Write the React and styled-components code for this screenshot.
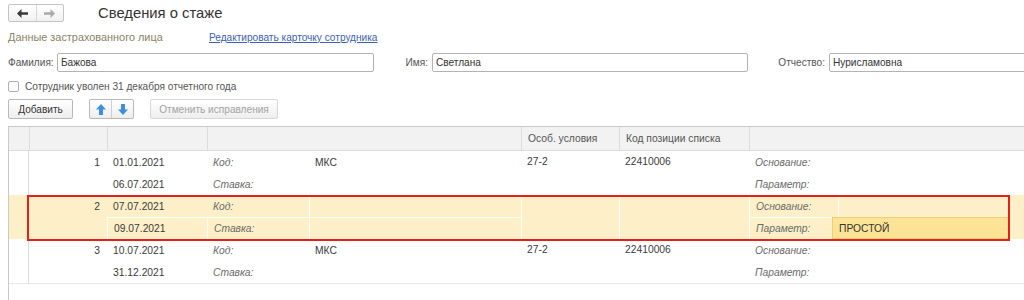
import React from "react";
import styled, { createGlobalStyle, css } from "styled-components";

const Global = createGlobalStyle`
  html, body { margin: 0; padding: 0; background: #fff; overflow: hidden; height: 300px; }
  body { font-family: "Liberation Sans", Arial, sans-serif; color: #333; }
`;

const Page = styled.div`
  width: 1060px;
  height: 300px;
  overflow: hidden;
  padding: 4px 0 0 8px;
  box-sizing: border-box;
  font-size: 10.1px;
  display: flex;
  flex-direction: column;
`;

const TopBar = styled.div`
  display: flex;
  align-items: center;
  height: 18px;
`;

const NavGroup = styled.div`
  display: flex;
  width: 56px;
  height: 18px;
  box-sizing: border-box;
  border: 1px solid #c4c4c4;
  border-radius: 2px;
  background: linear-gradient(#ffffff, #f1f1f1);
`;

const NavBtn = styled.div`
  flex: 1;
  display: flex;
  align-items: center;
  justify-content: center;
  & + & { border-left: 1px solid #d6d6d6; }
`;

const Title = styled.div`
  margin-left: 34px;
  font-size: 14.8px;
  color: #333;
  line-height: 18px;
`;

const InfoRow = styled.div`
  display: flex;
  align-items: center;
  margin-top: 9px;
  height: 12px;
`;

const Muted = styled.span`
  width: 201px;
  font-size: 10.9px;
  color: #8a8266;
`;

const Link = styled.a`
  color: #3c5fb8;
  text-decoration: underline;
  cursor: pointer;
`;

const FieldsRow = styled.div`
  display: flex;
  align-items: center;
  margin-top: 10px;
  height: 19px;
`;

const Label = styled.label`
  width: ${(p) => p.$w}px;
  box-sizing: border-box;
  text-align: right;
  padding-right: 4px;
  color: #555;
  white-space: nowrap;
`;

const Input = styled.div`
  width: ${(p) => p.$w}px;
  height: 19px;
  box-sizing: border-box;
  border: 1px solid #b3b3b3;
  border-radius: 2px;
  padding: 0 3px;
  display: flex;
  align-items: center;
  color: #333;
  background: #fff;
`;

const CheckRow = styled.div`
  display: flex;
  align-items: center;
  margin-top: 8px;
  height: 12px;
  gap: 6px;
  color: #555;
`;

const Box = styled.span`
  width: 11px;
  height: 11px;
  box-sizing: border-box;
  border: 1px solid #b0b0b0;
  border-radius: 2px;
  background: #fff;
`;

const ButtonsRow = styled.div`
  display: flex;
  align-items: center;
  margin-top: 7px;
  height: 20px;
`;

const Button = styled.div`
  height: 20px;
  width: ${(p) => p.$w}px;
  margin-left: ${(p) => p.$ml || 0}px;
  box-sizing: border-box;
  border: 1px solid ${(p) => (p.$disabled ? "#d8d8d8" : "#b9b9b9")};
  border-radius: 2px;
  background: linear-gradient(#ffffff, #eeeeee);
  color: ${(p) => (p.$disabled ? "#a3a3a3" : "#333")};
  display: flex;
  align-items: center;
  justify-content: center;
`;

const SplitButton = styled(Button)`
  padding: 0;
  justify-content: stretch;
`;

const Half = styled.div`
  flex: 1;
  height: 100%;
  display: flex;
  align-items: center;
  justify-content: center;
  & + & { border-left: 1px solid #cfcfcf; }
`;

const cols = "20px 78px 100px 102px 212px 98px 130px 89px 1fr";

const Table = styled.div`
  margin-top: 7px;
  flex: 1;
  border-top: 1px solid #c9c9c9;
  border-left: 1px solid #c9c9c9;
  font-size: 10.3px;
`;

const HeaderRow = styled.div`
  display: grid;
  grid-template-columns: ${cols};
  height: 24px;
  background: #f2f2f2;
  border-bottom: 1px solid #dcdcdc;
  box-sizing: border-box;
`;

const HeadCell = styled.div`
  grid-column: ${(p) => p.$col || "auto"};
  display: flex;
  align-items: center;
  padding-left: 6px;
  box-sizing: border-box;
  color: #555;
  border-left: ${(p) => (p.$first ? "none" : "1px solid #dcdcdc")};
  white-space: nowrap;
  overflow: hidden;
`;

const Record = styled.div`
  position: relative;
  display: grid;
  grid-template-columns: ${cols};
  grid-template-rows: 22px 22px;
  background: ${(p) => (p.$selected ? "#fdf0c8" : "#fff")};
`;

const Cell = styled.div`
  grid-column: ${(p) => p.$col};
  grid-row: ${(p) => p.$row};
  display: flex;
  align-items: ${(p) => (p.$top ? "flex-start" : "center")};
  padding-top: ${(p) => (p.$top ? "5px" : "0")};
  box-sizing: border-box;
  padding-left: 6px;
  white-space: nowrap;
  color: ${(p) => (p.$label ? "#6b6b6b" : "#3a3a3a")};
  font-style: ${(p) => (p.$label ? "italic" : "normal")};
  ${(p) => p.$right && css`justify-content: flex-end; padding: 0 7px 0 0;`}
  ${(p) => p.$lead && css`border-right: 1px solid #dcdcdc; padding: 0;`}
  ${(p) =>
    p.$grid &&
    css`
      border-left: 1px solid rgba(255, 255, 255, 0.85);
      border-top: ${p.$row === 2 ? "1px solid rgba(255,255,255,0.85)" : "none"};
    `}
`;

const ValueBox = styled.div`
  grid-column: 9;
  grid-row: 2;
  margin-left: -6px;
  width: 178px;
  height: 22px;
  box-sizing: border-box;
  background: #fce396;
  border: 1px solid #efcf6e;
  display: flex;
  align-items: center;
  padding-left: 6px;
  color: #333;
`;

const Frame = styled.div`
  position: absolute;
  left: 18px;
  top: 0;
  width: 983px;
  height: 46px;
  box-sizing: border-box;
  border: 2px solid #e3201c;
  pointer-events: none;
  z-index: 2;
`;

const Fill = styled.div`
  border-top: 1px solid #e6e6e6;
  height: 14px;
`;

const Arrow = ({ dir, color }) => (
  <svg width="11" height="9" viewBox="0 0 11 9">
    <g transform={dir === "right" ? "translate(11,0) scale(-1,1)" : undefined}>
      <polygon points="0,4.5 4.5,0 4.5,3.2 11,3.2 11,5.8 4.5,5.8 4.5,9" fill={color} />
    </g>
  </svg>
);

const VArrow = ({ dir }) => (
  <svg width="10" height="11" viewBox="0 0 10 11">
    <g transform={dir === "down" ? "translate(0,11) scale(1,-1)" : undefined}>
      <polygon points="5,0 10,5.5 7,5.5 7,11 3,11 3,5.5 0,5.5" fill="#3d8fe0" />
    </g>
  </svg>
);

const records = [
  { n: "1", d1: "01.01.2021", d2: "06.07.2021", code: "МКС", cond: "27-2", pos: "22410006" },
  { n: "2", d1: "07.07.2021", d2: "09.07.2021", code: "", cond: "", pos: "", param: "ПРОСТОЙ", selected: true },
  { n: "3", d1: "10.07.2021", d2: "31.12.2021", code: "МКС", cond: "27-2", pos: "22410006" },
];

export default function App() {
  return (
    <Page>
      <Global />
      <TopBar>
        <NavGroup>
          <NavBtn><Arrow dir="left" color="#3a3a3a" /></NavBtn>
          <NavBtn><Arrow dir="right" color="#a9a9a9" /></NavBtn>
        </NavGroup>
        <Title>Сведения о стаже</Title>
      </TopBar>
      <InfoRow>
        <Muted>Данные застрахованного лица</Muted>
        <Link>Редактировать карточку сотрудника</Link>
      </InfoRow>
      <FieldsRow>
        <Label $w={49}>Фамилия:</Label>
        <Input $w={317}>Бажова</Input>
        <Label $w={58}>Имя:</Label>
        <Input $w={316}>Светлана</Input>
        <Label $w={81}>Отчество:</Label>
        <Input $w={230}>Нурисламовна</Input>
      </FieldsRow>
      <CheckRow>
        <Box />
        <span>Сотрудник уволен 31 декабря отчетного года</span>
      </CheckRow>
      <ButtonsRow>
        <Button $w={65}>Добавить</Button>
        <SplitButton $w={45} $ml={16}>
          <Half><VArrow dir="up" /></Half>
          <Half><VArrow dir="down" /></Half>
        </SplitButton>
        <Button $w={128} $ml={16} $disabled>Отменить исправления</Button>
      </ButtonsRow>
      <Table>
        <HeaderRow>
          <HeadCell $first />
          <HeadCell />
          <HeadCell />
          <HeadCell $col="4 / 6" />
          <HeadCell>Особ. условия</HeadCell>
          <HeadCell>Код позиции списка</HeadCell>
          <HeadCell $col="8 / 10" />
        </HeaderRow>
        {records.map((r) => {
          const g = !!r.selected;
          return (
            <Record key={r.n} $selected={g}>
              <Cell $col="1" $row="1 / 3" $lead={!g} />
              <Cell $col="2" $row={1} $right>{r.n}</Cell>
              <Cell $col="3" $row={1}>{r.d1}</Cell>
              <Cell $col="3" $row={2} $grid={g}>{r.d2}</Cell>
              <Cell $col="4" $row={1} $label>Код:</Cell>
              <Cell $col="5" $row={1} $grid={g}>{r.code}</Cell>
              <Cell $col="4" $row={2} $label $grid={g}>Ставка:</Cell>
              <Cell $col="5" $row={2} $grid={g} />
              <Cell $col="6" $row="1 / 3" $grid={g} $top>{r.cond}</Cell>
              <Cell $col="7" $row="1 / 3" $grid={g} $top>{r.pos}</Cell>
              <Cell $col="8" $row={1} $label $grid={g}>Основание:</Cell>
              <Cell $col="9" $row={1} $grid={g} />
              <Cell $col="8" $row={2} $label $grid={g}>Параметр:</Cell>
              {r.param ? <ValueBox>{r.param}</ValueBox> : <Cell $col="9" $row={2} />}
              {g && <Frame />}
            </Record>
          );
        })}
        <Fill />
      </Table>
    </Page>
  );
}
